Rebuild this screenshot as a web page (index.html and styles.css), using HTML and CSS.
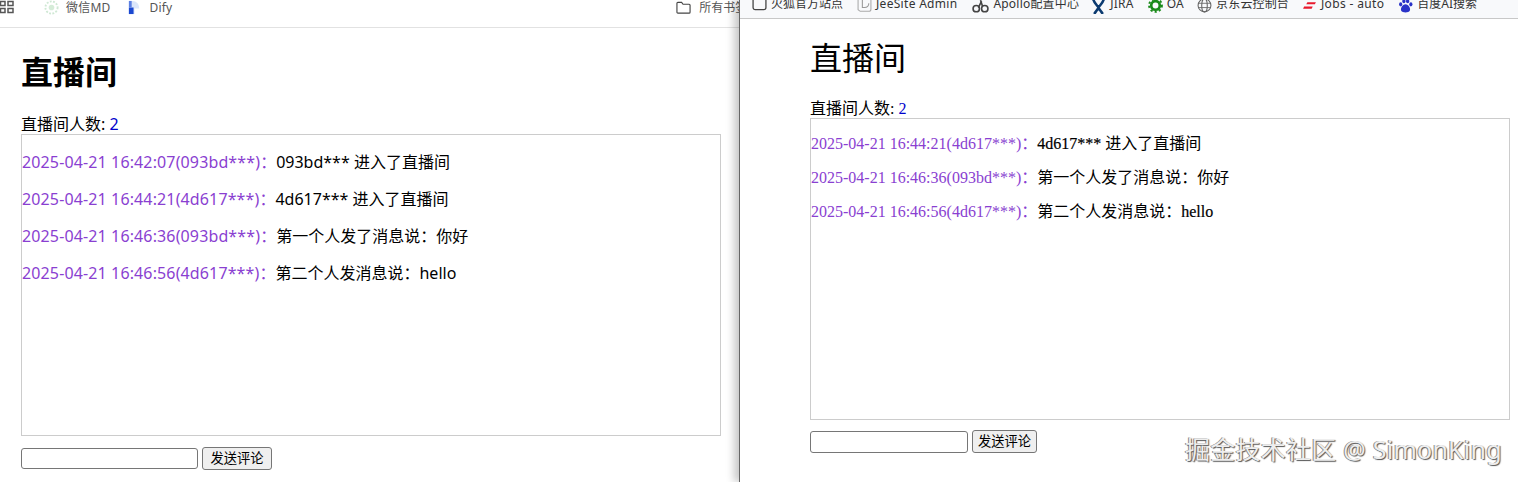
FILE: index.html
```html
<!DOCTYPE html>
<html lang="zh">
<head>
<meta charset="utf-8">
<title>直播间</title>
<link rel="stylesheet" href="styles.css">
</head>
<body>
<div class="desk">
  <section class="win win-left">
    <nav class="bar bar-left">
      <svg class="ic apps" viewBox="0 0 14 14"><path d="M.5 1.500h4.500v4h-4.500zM8 1.500h5v4H8zM.5 8.500h4.500v4h-4.500zM8 8.500h5v4H8z" fill="none" stroke="#555" stroke-width="1.500"/></svg>
      <i class="sep sep-a"></i>
      <span class="bm bm-wx"><svg class="ic" viewBox="0 0 16 16"><circle cx="8" cy="8" r="6.500" fill="none" stroke="#cfe8d4" stroke-width="2" stroke-dasharray="2 1.500"/><circle cx="8" cy="8" r="3" fill="#d5ecd8"/></svg>微信MD</span>
      <span class="bm bm-dify"><svg class="ic" viewBox="0 0 14 16"><path d="M1 1h4c4 0 7 3 7 8H7V15H1z" fill="#dbe6fa"/><path d="M1 8h5v7H1z" fill="#1b48d0"/><path d="M1 1h3v7H1z" fill="#5d80e2"/></svg>Dify</span>
      <i class="sep sep-b"></i>
      <span class="bm bm-all"><svg class="ic folder" viewBox="0 0 16 14"><path d="M1 2.500a1 1 0 0 1 1-1h4l1.500 2H14a1 1 0 0 1 1 1V12a1 1 0 0 1-1 1H2a1 1 0 0 1-1-1z" fill="none" stroke="#444" stroke-width="1.200"/></svg>所有书签</span>
    </nav>
    <main class="page page-l">
      <h1 class="title">直播间</h1>
      <div class="count">直播间人数: <span class="num">2</span></div>
      <div class="log">
        <p class="msg"><span class="meta">2025-04-21 16:42:07(093bd***)<span class="col">：</span></span>093bd*** 进入了直播间</p>
        <p class="msg"><span class="meta">2025-04-21 16:44:21(4d617***)<span class="col">：</span></span>4d617*** 进入了直播间</p>
        <p class="msg"><span class="meta">2025-04-21 16:46:36(093bd***)<span class="col">：</span></span>第一个人发了消息说<span class="col">：</span>你好</p>
        <p class="msg"><span class="meta">2025-04-21 16:46:56(4d617***)<span class="col">：</span></span>第二个人发消息说<span class="col">：</span>hello</p>
      </div>
      <form class="send"><input class="field" type="text"><button class="btn" type="button">发送评论</button></form>
    </main>
  </section>
  <section class="win win-right">
    <nav class="bar bar-right">
      <span class="bm b1"><svg class="ic" viewBox="0 0 14 14"><rect x="1" y="-3" width="12" height="13" rx="2" fill="none" stroke="#444" stroke-width="1.200"/></svg>火狐官方站点</span>
      <span class="bm b2"><svg class="ic" viewBox="0 0 14 14"><path d="M1 0v10l2 1.500h8a2 2 0 0 0 2-2V0" fill="none" stroke="#aaa"/><path d="M5 0v8h2c3 0 4-2 4-4" fill="none" stroke="#999"/></svg>JeeSite Admin</span>
      <span class="bm b3"><svg class="ic wide" viewBox="0 0 16 14"><circle cx="4" cy="9" r="3" fill="none" stroke="#444" stroke-width="1.500"/><circle cx="12" cy="9" r="3" fill="none" stroke="#444" stroke-width="1.500"/><path d="M6 8 9 2M10 7 8 1" stroke="#444" stroke-width="1.500"/></svg>Apollo配置中心</span>
      <span class="bm b4"><svg class="ic" viewBox="0 0 14 14"><path d="M2 0c1 4 4 6 5 8s2 3 4 6M12 0c-1 4-4 6-5 8s-2 3-4 6" fill="none" stroke="#0b3a70" stroke-width="2.400"/></svg>JIRA</span>
      <span class="bm b5"><svg class="ic" viewBox="0 0 14 14"><circle cx="7" cy="6" r="4" fill="none" stroke="#1a8a1a" stroke-width="2.500"/><circle cx="7" cy="6" r="6" fill="none" stroke="#1a8a1a" stroke-width="1.800" stroke-dasharray="2 2"/></svg>OA</span>
      <span class="bm b6"><svg class="ic" viewBox="0 0 14 14"><circle cx="7" cy="6" r="6" fill="none" stroke="#666"/><ellipse cx="7" cy="6" rx="2.600" ry="6" fill="none" stroke="#666"/><path d="M1 4h12M1 8h12" stroke="#666" stroke-width=".8"/></svg>京东云控制台</span>
      <span class="bm b7"><svg class="ic" viewBox="0 0 14 14"><path d="M5 3h8l-1 2H4z" fill="#e8192c"/><path d="M2 7h8L9 9H1z" fill="#e8192c"/></svg>Jobs - auto</span>
      <span class="bm b8"><svg class="ic" viewBox="0 0 14 14"><g fill="#2932c8"><ellipse cx="2.500" cy="5" rx="1.500" ry="2"/><ellipse cx="5.500" cy="2" rx="1.500" ry="2"/><ellipse cx="9" cy="2" rx="1.500" ry="2"/><ellipse cx="12" cy="5" rx="1.500" ry="2"/><path d="M7 5c3 0 5 4 4 6s-7 2-8 0 1-6 4-6z"/></g></svg>百度AI搜索</span>
    </nav>
    <main class="page page-r">
      <h1 class="title">直播间</h1>
      <div class="count">直播间人数: <span class="num">2</span></div>
      <div class="log">
        <p class="msg"><span class="meta">2025-04-21 16:44:21(4d617***)<span class="col">：</span></span><span class="heavy">4d617***</span> 进入了直播间</p>
        <p class="msg"><span class="meta">2025-04-21 16:46:36(093bd***)<span class="col">：</span></span>第一个人发了消息说<span class="col">：</span>你好</p>
        <p class="msg"><span class="meta">2025-04-21 16:46:56(4d617***)<span class="col">：</span></span>第二个人发消息说<span class="col">：</span><span class="heavy">hello</span></p>
      </div>
      <form class="send"><input class="field" type="text"><button class="btn" type="button">发送评论</button></form>
    </main>
    <div class="mark">掘金技术社区 @ SimonKing</div>
  </section>
</div>
</body>
</html>
```
FILE: styles.css
```css
* { box-sizing: border-box; }
html, body { margin: 0; height: 100%; background: #fff; overflow: hidden; }
.desk { display: flex; width: 1518px; height: 482px; }
.win { position: relative; height: 482px; background: #fff; }
.win-left { width: 739px; font-family: "Noto Sans", "Noto Sans CJK SC", sans-serif; }
.win-right { width: 779px; border-left: 1px solid #666; box-shadow: -5px 0 8px rgba(0,0,0,.22); font-family: "Liberation Serif", "Noto Sans CJK SC", serif; }
.bar { display: flex; align-items: flex-start; overflow: hidden; font-family: "Noto Sans", "Noto Sans CJK SC", sans-serif; font-size: 12px; line-height: 14px; color: #555; }
.bar-left { height: 28px; border-bottom: 1px solid #e2e2e2; background: #fff; line-height: 16px; }
.bar-right { height: 19px; border-bottom: 1px solid #c8c8c8; background: #f8f9fb; padding-left: 12px; color: #333; }
.bm { display: inline-flex; align-items: flex-start; white-space: nowrap; }
.bar-right .bm { margin-top: -3px; gap: 4px; }
.bar-right .b1 { margin-right: 14px; }
.bar-right .b2 { margin-right: 15px; letter-spacing: .3px; }
.bar-right .b3 { margin-right: 12px; letter-spacing: .2px; }
.bar-right .b4 { margin-right: 14px; letter-spacing: .25px; }
.bar-right .b5 { margin-right: 13px; letter-spacing: .3px; }
.bar-right .b6 { margin-right: 13px; letter-spacing: .15px; }
.bar-right .b7 { margin-right: 14px; letter-spacing: .35px; }
.ic { width: 15px; height: 15px; flex: none; }
.bar-right .ic { margin-top: 2px; }
.bar-right .wide { width: 17px; }
.apps { width: 14px; height: 14px; }
.sep { display: block; width: 2px; height: 15px; background: #dbe7f5; }
.sep-a { margin-left: 15px; }
.bm-wx { margin-left: 15px; gap: 7px; letter-spacing: .2px; }
.bm-dify { margin-left: 17px; gap: 7px; letter-spacing: .2px; }
.sep-b { margin-left: 488px; }
.bm-all { margin-left: 16px; gap: 8px; }
.page-l { padding: 0 0 0 21px; }
.page-r { padding: 0 0 0 70px; }
.title { margin: 0; font-size: 32px; line-height: 37px; }
.page-l .title { padding-top: 25px; font-weight: 700; }
.page-r .title { padding-top: 22px; font-weight: 400; }
.count { font-size: 16px; color: #000; line-height: 18px; height: 18px; }
.page-l .count { margin-top: 25px; margin-bottom: 1px; }
.page-r .count { margin-top: 22px; }
.num { color: #0000cc; }
.log { width: 700px; height: 302px; border: 1px solid #ccc; overflow: hidden; }
.msg { margin: 16px 0; font-size: 16px; color: #000; }
.page-l .msg { line-height: 21px; }
.page-r .msg { line-height: 18px; }
.page-l .log { padding-top: 1px; }
.meta { color: #8a3fd1; }
.page-l .meta { letter-spacing: .13px; }
.col { font-family: "Noto Sans CJK TC", sans-serif; letter-spacing: 0; line-height: 0; }
.heavy { -webkit-text-stroke: .2px #000; }
.send { display: flex; align-items: flex-start; gap: 4px; }
.page-l .send { margin-top: 12px; }
.page-r .send { margin-top: 11px; }
.field { height: 21px; padding: 1px 2px; border: 1px solid #767676; border-radius: 3px; background: #fff; }
.page-l .field { width: 177px; }
.page-r .field { width: 158px; height: 22px; }
.btn { padding: 0 0 2px; white-space: nowrap; border: 1px solid #767676; border-radius: 3px; background: #efefef; font-size: 13.300px; line-height: 18px; font-family: "Noto Sans CJK SC", sans-serif; color: #000; }
.page-l .btn { width: 70px; height: 23px; margin-top: -1px; }
.page-r .btn { width: 65px; height: 23px; margin-top: -1px; }
.mark { position: absolute; left: 445px; top: 431px; font-family: "Noto Sans", "Noto Sans CJK SC", sans-serif; font-size: 25px; line-height: 36px; letter-spacing: .25px; white-space: nowrap; color: #eee; text-shadow: 1px 1px 1px #555, -1px 0 0 #888; }
```
